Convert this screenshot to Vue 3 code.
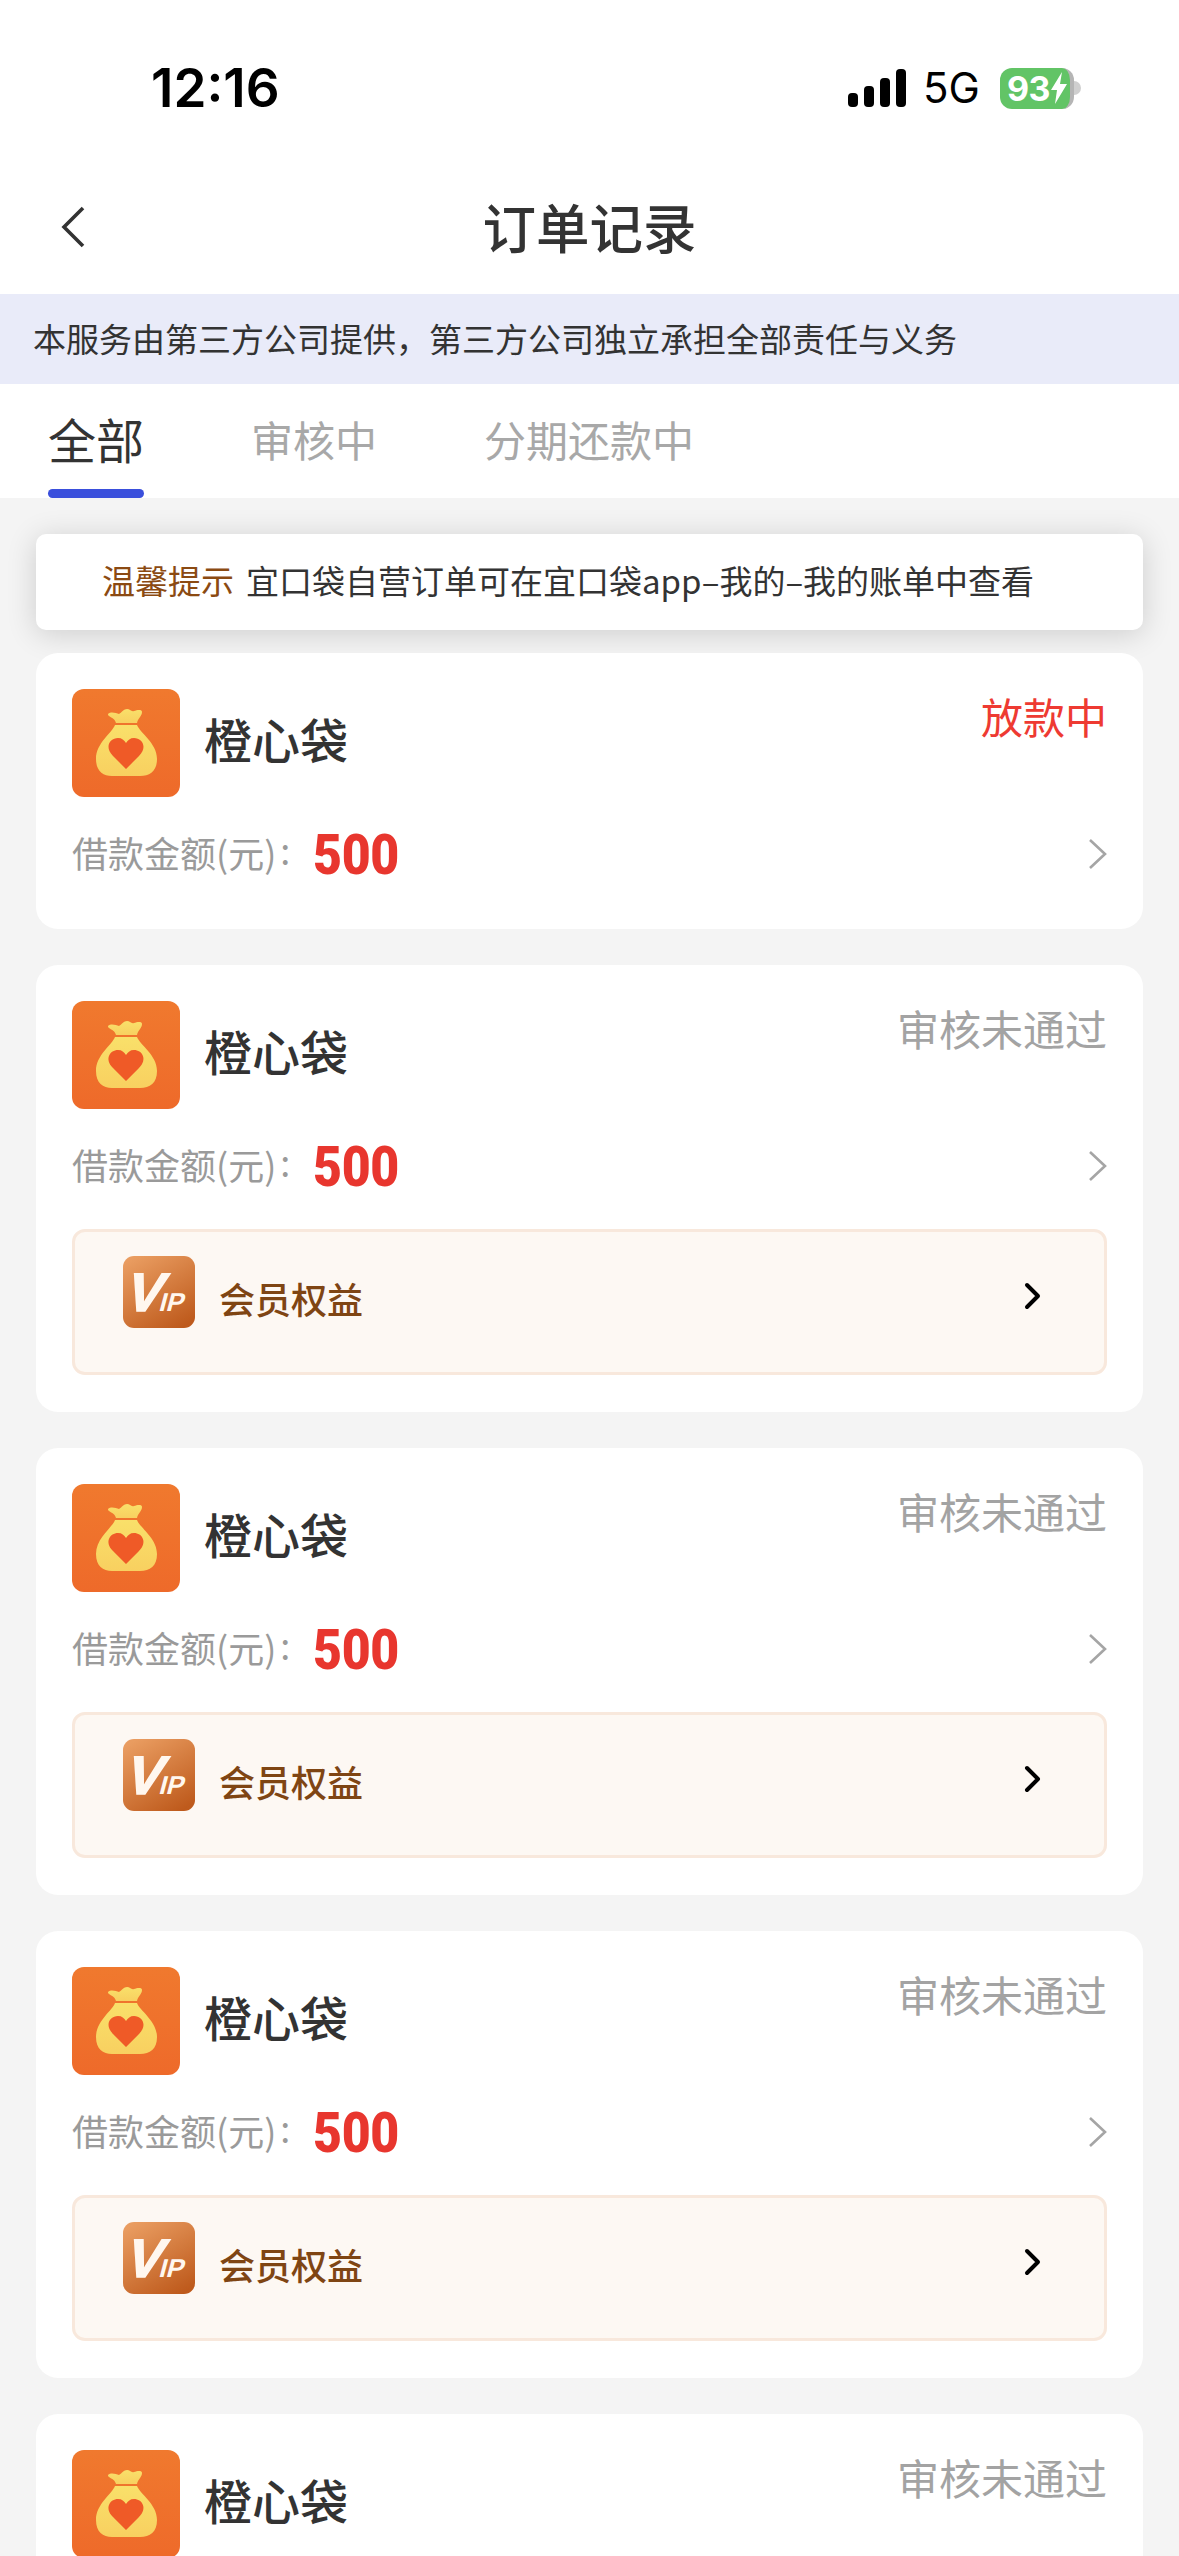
<script setup>
const cards = [
  { id: 1, status: '放款中', active: true, vip: false },
  { id: 2, status: '审核未通过', active: false, vip: true },
  { id: 3, status: '审核未通过', active: false, vip: true },
  { id: 4, status: '审核未通过', active: false, vip: true },
  { id: 5, status: '审核未通过', active: false, vip: true },
]
</script>

<template>
  <div class="page">
    <div class="head">
      <div class="status-bar">
        <span class="time">12:16</span>
        <div class="status-right">
          <svg class="signal" width="58" height="38" viewBox="0 0 58 38">
            <rect x="0" y="24" width="10" height="14" rx="4" />
            <rect x="16" y="17" width="10" height="21" rx="4" />
            <rect x="32" y="9" width="10" height="29" rx="4" />
            <rect x="48" y="0" width="10" height="38" rx="4" />
          </svg>
          <span class="net">5G</span>
          <div class="battery">
            <div class="battery-body">
              <span class="battery-num">93</span>
              <svg width="18" height="32" viewBox="0 0 18 32"><path d="M12 0 1 18h6L5 32 17 12h-7z" fill="#fff" /></svg>
            </div>
            <div class="battery-tip"></div>
          </div>
        </div>
      </div>
      <div class="nav">
        <svg class="back" width="26" height="42" viewBox="0 0 26 42"><path d="M23 2 4 21l19 19" fill="none" stroke="#333" stroke-width="3.6" /></svg>
        <h1 class="title">订单记录</h1>
      </div>
    </div>

    <div class="banner">本服务由第三方公司提供，第三方公司独立承担全部责任与义务</div>

    <div class="tabs">
      <div class="tab tab-active">全部<i class="tab-line"></i></div>
      <div class="tab">审核中</div>
      <div class="tab">分期还款中</div>
    </div>

    <div class="notice">
      <span class="notice-label">温馨提示</span>
      <span class="notice-text">宜口袋自营订单可在宜口袋app–我的–我的账单中查看</span>
    </div>

    <div class="list">
      <div v-for="c in cards" :key="c.id" class="card">
        <div class="card-top">
          <svg class="logo" width="108" height="108" viewBox="0 0 108 108">
            <defs>
              <linearGradient :id="'bg' + c.id" x1="0" y1="0" x2="0" y2="1">
                <stop offset="0" stop-color="#f0792e" />
                <stop offset="1" stop-color="#ee6a2a" />
              </linearGradient>
              <linearGradient :id="'bag' + c.id" x1="0" y1="0" x2="0" y2="1">
                <stop offset="0" stop-color="#f9e06a" />
                <stop offset="1" stop-color="#f8d060" />
              </linearGradient>
            </defs>
            <rect width="108" height="108" rx="12" :fill="'url(#bg' + c.id + ')'" />
            <path d="M36 25c3-3 8-1 11 0 3-2 5-5 8-5 3 0 4 3 7 2 3-1 8-2 8 1 0 4-4 6-5 11H44c-1-4-4-5-7-7-1-1-1-1-1-2z" :fill="'url(#bag' + c.id + ')'" />
            <path d="M43 36h22c3 8 20 18 20 34 0 12-7 17-17 17H40c-9 0-16-5-16-17 0-16 16-26 19-34z" :fill="'url(#bag' + c.id + ')'" />
            <path d="M54 80 41 67c-9-9-3-18 5-18 4 0 6 2 8 5 2-3 4-5 8-5 8 0 14 9 5 18z" fill="#ef5a27" />
          </svg>
          <span class="name">橙心袋</span>
          <span class="state" :class="{ 'state-active': c.active }">{{ c.status }}</span>
        </div>
        <div class="amount-row">
          <span class="amount-label">借款金额(元)<b class="colon">:</b></span>
          <span class="amount">500</span>
          <svg class="arrow" width="20" height="32" viewBox="0 0 20 32"><path d="M2 2l15 14L2 30" fill="none" stroke="#a5a5a5" stroke-width="2.6" /></svg>
        </div>
        <div v-if="c.vip" class="vip">
          <svg class="vip-icon" width="72" height="72" viewBox="0 0 72 72">
            <defs>
              <linearGradient :id="'vip' + c.id" x1="0.2" y1="0" x2="0.8" y2="1">
                <stop offset="0" stop-color="#e99c60" />
                <stop offset="1" stop-color="#be5a1c" />
              </linearGradient>
            </defs>
            <rect width="72" height="72" rx="11" :fill="'url(#vip' + c.id + ')'" />
            <text transform="translate(0 55) skewX(-17)" class="vip-v">V</text>
            <text transform="translate(35 55) skewX(-15)" class="vip-ip">IP</text>
          </svg>
          <span class="vip-text">会员权益</span>
          <svg class="vip-arrow" width="18" height="28" viewBox="0 0 18 28"><path d="M3 3l11 11L3 25" fill="none" stroke="#000" stroke-width="4" stroke-linecap="round" stroke-linejoin="round" /></svg>
        </div>
      </div>
    </div>
  </div>
</template>

<style scoped>
.page {
  width: 1179px;
  height: 2556px;
  overflow: hidden;
  background: #f4f4f4;
  font-family: "Noto Sans CJK SC", "Noto Sans", sans-serif;
  color: #333;
}
.head { background: #fff; }
.status-bar {
  height: 160px;
  box-sizing: border-box;
  padding: 61px 98px 0 151px;
  display: flex;
  justify-content: space-between;
  align-items: flex-start;
}
.time {
  font-family: Inter, sans-serif;
  font-size: 53px;
  line-height: 54px;
  font-weight: 600;
  color: #000;
  letter-spacing: 0;
}
.status-right {
  display: flex;
  align-items: center;
  margin-top: 6px;
}
.signal { fill: #000; margin-left: -1px; }
.net {
  font-family: Inter, sans-serif;
  font-size: 42px;
  line-height: 42px;
  color: #000;
  margin-left: 17px;
  width: 77px;
}
.battery { display: flex; align-items: center; }
.battery-body {
  width: 74px;
  height: 41px;
  background: #62c466;
  border-radius: 12px;
  border-right: 4px solid #b5b5b5;
  box-sizing: border-box;
  display: flex;
  align-items: center;
  padding-left: 7px;
}
.battery-num {
  font-family: Inter, sans-serif;
  font-size: 34px;
  line-height: 41px;
  font-weight: 700;
  color: #fff;
  letter-spacing: -0.5px;
}
.battery-tip {
  width: 7px;
  height: 14px;
  background: #cfcfcf;
  border-radius: 0 7px 7px 0;
}
.nav {
  height: 134px;
  position: relative;
  display: flex;
  align-items: center;
  justify-content: center;
}
.back { position: absolute; left: 60px; top: 46px; }
.title {
  margin: -3px 0 0;
  font-size: 53.5px;
  line-height: 70px;
  font-weight: 500;
  color: #333;
}
.banner {
  height: 90px;
  line-height: 88px;
  background: #e9ebf9;
  padding-left: 33px;
  font-size: 33px;
  color: #333;
}
.tabs {
  height: 114px;
  background: #fff;
  display: flex;
  box-sizing: border-box;
  padding-left: 48px;
  gap: 107px;
  align-items: flex-start;
}
.tab {
  position: relative;
  font-size: 42px;
  line-height: 60px;
  margin-top: 25px;
  color: #a8a8a8;
}
.tab-active {
  font-size: 48px;
  line-height: 64px;
  margin-top: 22px;
  color: #333;
}
.tab-line {
  position: absolute;
  left: 0;
  right: 0;
  top: 83px;
  height: 9px;
  background: #3a4fdc;
  border-radius: 5px;
}
.notice {
  height: 96px;
  margin: 36px 36px 0;
  background: #fff;
  border-radius: 10px;
  box-shadow: 0 4px 30px rgba(0, 0, 0, 0.16);
  display: flex;
  align-items: center;
  padding: 0 0 5px 66px;
  box-sizing: border-box;
  font-size: 33px;
  position: relative;
}
.notice-label { color: #8b4a12; margin-right: 12px; }
.notice-text { color: #333; font-size: 33px; }
.list {
  margin: 23px 36px 0;
  display: flex;
  flex-direction: column;
  gap: 36px;
}
.card {
  background: #fff;
  border-radius: 22px;
  padding: 36px 36px 37px;
  position: relative;
}
.card-top {
  display: flex;
  align-items: flex-start;
  height: 108px;
}
.logo { flex: none; }
.name {
  font-size: 48px;
  line-height: 64px;
  font-weight: 500;
  color: #333;
  margin: 17px 0 0 24px;
}
.state {
  margin: -4px 0 0 auto;
  font-size: 42px;
  line-height: 62px;
  color: #a3a3a3;
}
.state-active { color: #ee3a32; }
.amount-row {
  height: 62px;
  margin: 26px 0 7px;
  display: flex;
  align-items: center;
}
.amount-label {
  font-size: 36px;
  line-height: 50px;
  color: #9a9a9a;
  margin-top: -4px;
  width: 241px;
  white-space: nowrap;
}
.colon { font-weight: 400; margin-left: 4px; position: relative; top: -3px; }
.amount {
  display: inline-block;
  font-family: Roboto, sans-serif;
  font-size: 50px;
  line-height: 62px;
  font-weight: 900;
  letter-spacing: -0.3px;
  color: #e8362e;
  transform: scaleY(1.12);
  margin-top: 2px;
}
.arrow { margin-left: auto; margin-right: -1px; }
.vip {
  height: 146px;
  margin-top: 32px;
  box-sizing: border-box;
  background: #fdf8f3;
  border: 3px solid #f8e8dc;
  border-radius: 13px;
  display: flex;
  align-items: flex-start;
  padding: 24px 62px 0 48px;
}
.vip-icon { flex: none; }
.vip-text {
  font-size: 36px;
  line-height: 50px;
  font-weight: 500;
  color: #7f4513;
  margin: 17px 0 0 24px;
}
.vip-arrow { margin: 26px 0 0 auto; }
.vip-v {
  font-family: "Liberation Sans", sans-serif;
  font-size: 54px;
  font-weight: 700;
  fill: #fff7ef;
  stroke: #fff7ef;
  stroke-width: 1.6px;
}
.vip-ip {
  font-family: "Liberation Sans", sans-serif;
  font-size: 26px;
  font-weight: 700;
  fill: #fff7ef;
}
</style>
